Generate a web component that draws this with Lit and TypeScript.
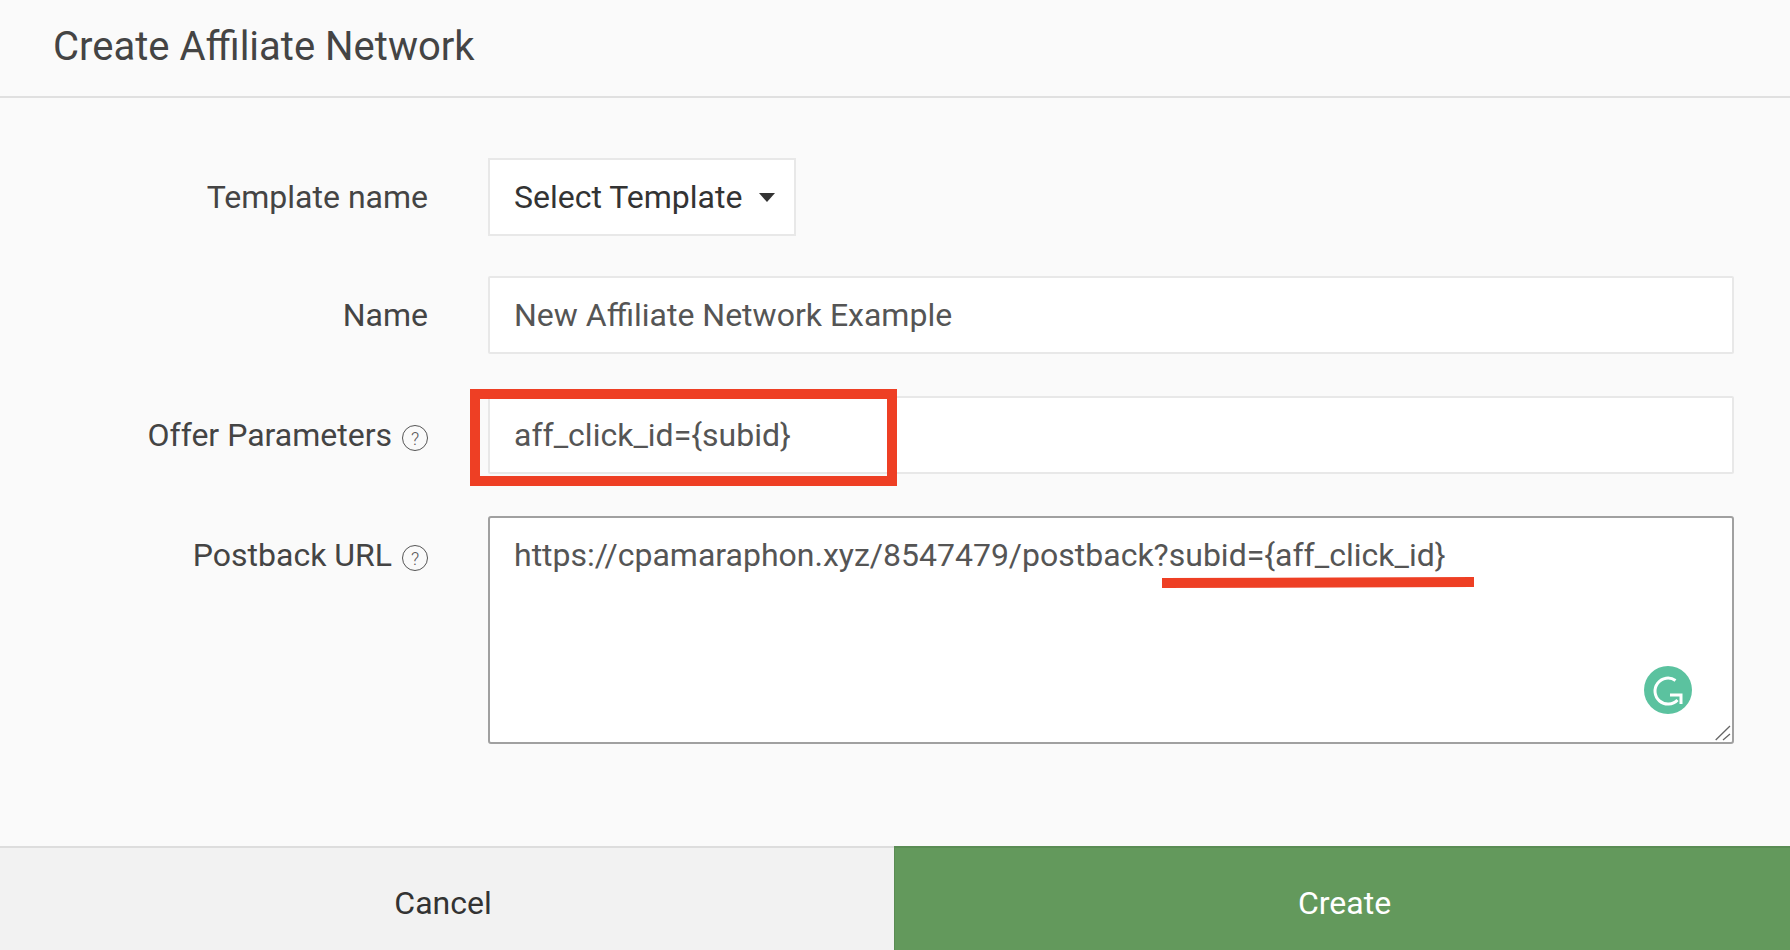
import { LitElement, html, css } from "lit";
import { customElement } from "lit/decorators.js";

@customElement("app-root")
export class AppRoot extends LitElement {
  static styles = css`
    :host {
      display: flex;
      flex-direction: column;
      position: relative;
      height: 950px;
      overflow: hidden;
      background: #fafafa;
      font-family: Roboto, "Liberation Sans", sans-serif;
      color: #444;
      box-sizing: border-box;
    }
    * { box-sizing: border-box; }
    .header {
      height: 98px;
      flex: none;
      display: flex;
      align-items: center;
      padding: 0 0 4px 53px;
      border-bottom: 2px solid #e0e0e0;
      font-size: 40px;
      color: #444;
    }
    .body {
      flex: 1;
      padding: 60px 56px 0 0;
      display: flex;
      flex-direction: column;
    }
    .row {
      display: grid;
      grid-template-columns: 428px 1fr;
      column-gap: 60px;
      margin-bottom: 42px;
      font-size: 32px;
    }
    .row.first { margin-bottom: 40px; }
    .label {
      display: flex;
      justify-content: flex-end;
      align-items: center;
      gap: 10px;
      height: 78px;
      color: #444;
    }
    .help {
      width: 26px;
      height: 26px;
      flex: none;
      border: 1px solid #555;
      border-radius: 50%;
      display: flex;
      align-items: center;
      justify-content: center;
      font-size: 18px;
      font-weight: 300;
      color: #555;
      margin-top: 6px;
    }
    .field {
      height: 78px;
      background: #fff;
      border: 2px solid #e8e8e8;
      border-radius: 2px;
      display: flex;
      align-items: center;
      padding: 0 24px;
      color: #555;
      white-space: nowrap;
    }
    .select {
      justify-self: start;
      width: 308px;
      border-radius: 0;
      color: #333;
      gap: 17px;
    }
    .caret {
      width: 0;
      height: 0;
      border-left: 8px solid transparent;
      border-right: 8px solid transparent;
      border-top: 9px solid #333;
      flex: none;
    }
    .textarea {
      position: relative;
      height: 228px;
      background: #fff;
      border: 2px solid #a0a0a0;
      border-radius: 3px;
      padding: 18px 24px;
      color: #555;
      line-height: 38px;
    }
    .grip {
      position: absolute;
      right: 1px;
      bottom: 1px;
      width: 16px;
      height: 16px;
    }
    .grammarly {
      position: absolute;
      right: 40px;
      bottom: 28px;
      width: 48px;
      height: 48px;
    }
    .footer {
      flex: none;
      height: 104px;
      display: flex;
      font-size: 32px;
    }
    .btn {
      display: flex;
      align-items: center;
      justify-content: center;
      padding-top: 7px;
    }
    .cancel {
      width: 894px;
      background: #f2f2f2;
      border-top: 2px solid #ddd;
      color: #333;
      padding-right: 8px;
    }
    .create {
      flex: 1;
      background: #63995c;
      border-top: 2px solid #5a8c54;
      border-left: 1px solid #5a8c54;
      color: #fff;
      padding-left: 4px;
    }
    .red-box {
      position: absolute;
      left: 470px;
      top: 389px;
      width: 427px;
      height: 97px;
      border: 10px solid #ee3f24;
      pointer-events: none;
    }
    .red-line {
      position: absolute;
      left: 1162px;
      top: 577px;
      width: 312px;
      height: 11px;
    }
  `;

  private help() {
    return html`<span class="help">?</span>`;
  }

  render() {
    return html`
      <div class="header">Create Affiliate Network</div>
      <div class="body">
        <div class="row first">
          <div class="label">Template name</div>
          <div class="field select">Select Template<span class="caret"></span></div>
        </div>
        <div class="row">
          <div class="label">Name</div>
          <div class="field">New Affiliate Network Example</div>
        </div>
        <div class="row">
          <div class="label">Offer Parameters ${this.help()}</div>
          <div class="field">aff_click_id={subid}</div>
        </div>
        <div class="row">
          <div class="label">Postback URL ${this.help()}</div>
          <div class="textarea">
            https://cpamaraphon.xyz/8547479/postback?subid={aff_click_id}
            <svg class="grammarly" viewBox="0 0 48 48">
              <circle cx="24" cy="24" r="24" fill="#5bc29f"></circle>
              <path d="M31.5 14.5 A13 13 0 1 0 33.5 34" fill="none" stroke="#fff" stroke-width="3"></path>
              <path d="M26 29 H37 V38" fill="none" stroke="#fff" stroke-width="3"></path>
            </svg>
            <svg class="grip" viewBox="0 0 16 16">
              <path d="M0.7 15 L15 1 M8 15 L15 9" stroke="#666" stroke-width="1.3" fill="none"></path>
            </svg>
          </div>
        </div>
      </div>
      <div class="footer">
        <div class="btn cancel">Cancel</div>
        <div class="btn create">Create</div>
      </div>
      <div class="red-box"></div>
      <svg class="red-line" viewBox="0 0 312 11">
        <polygon points="0,1 312,0 312,10 0,11" fill="#ee3f24"></polygon>
      </svg>
    `;
  }
}
